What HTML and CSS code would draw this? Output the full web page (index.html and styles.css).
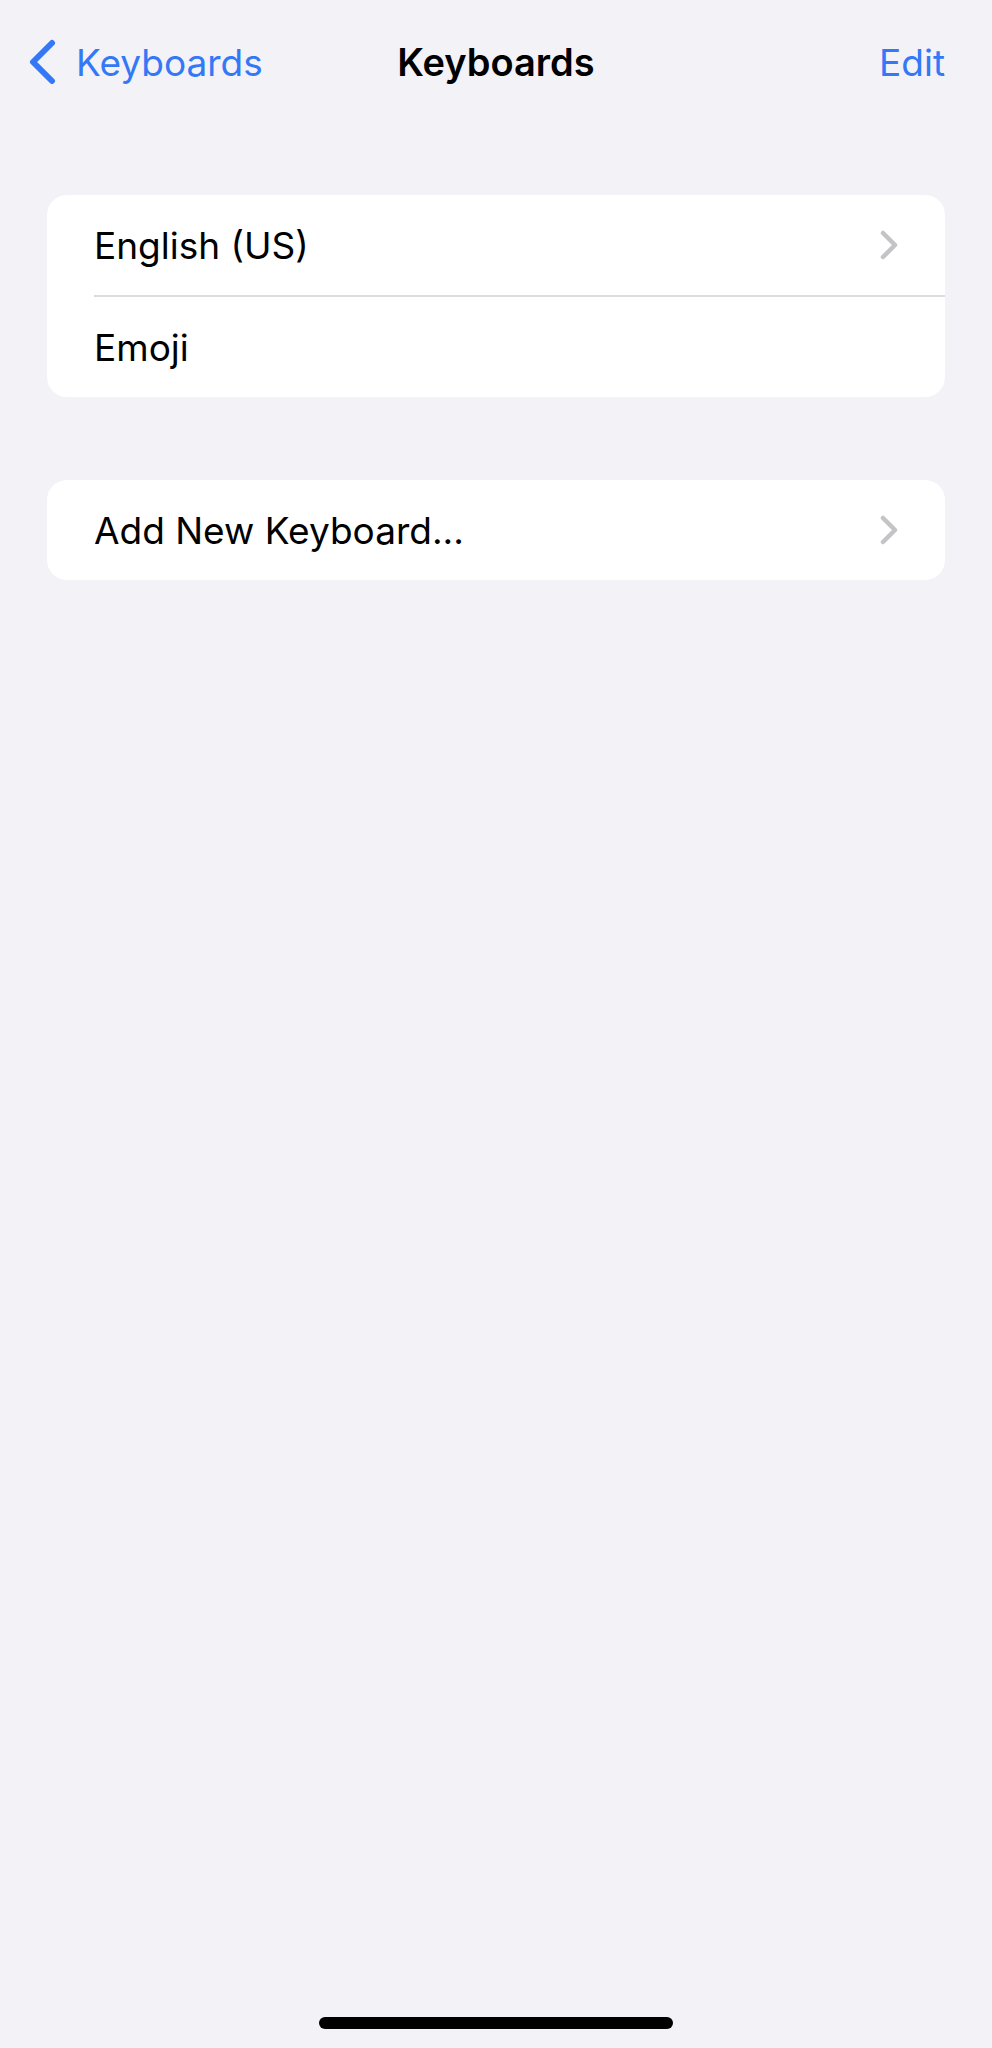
FILE: index.html
```html
<!DOCTYPE html>
<html lang="en">
<head>
  <meta charset="UTF-8">
  <title>Keyboards</title>
  <link rel="stylesheet" href="styles.css">
</head>
<body>
  <div class="screen">
    <header class="navbar">
      <a class="nav-back" href="#">
        <svg class="back-chevron" width="28" height="46" viewBox="0 0 28 46">
          <polyline points="24,4 5,23 24,42" fill="none" stroke="currentColor" stroke-width="6" stroke-linecap="round" stroke-linejoin="round"/>
        </svg>
        <span>Keyboards</span>
      </a>
      <h1 class="nav-title">Keyboards</h1>
      <a class="nav-action" href="#">Edit</a>
    </header>

    <main class="content">
      <div class="group">
        <div class="row">
          <span class="row-label">English (US)</span>
          <svg class="disclosure" width="20" height="30" viewBox="0 0 20 30">
            <polyline points="4,3 16,15 4,27" fill="none" stroke="currentColor" stroke-width="4.5" stroke-linecap="round" stroke-linejoin="round"/>
          </svg>
        </div>
        <div class="row">
          <span class="row-label">Emoji</span>
        </div>
      </div>

      <div class="group">
        <div class="row">
          <span class="row-label">Add New Keyboard...</span>
          <svg class="disclosure" width="20" height="30" viewBox="0 0 20 30">
            <polyline points="4,3 16,15 4,27" fill="none" stroke="currentColor" stroke-width="4.5" stroke-linecap="round" stroke-linejoin="round"/>
          </svg>
        </div>
      </div>
    </main>

    <div class="home-bar"><span class="home-indicator"></span></div>
  </div>
</body>
</html>
```

FILE: styles.css
```css
body {
  margin: 0;
  background: #f2f2f7;
  font-family: Inter, "Noto Sans", sans-serif;
  color: #000;
}

.screen {
  display: flex;
  flex-direction: column;
  min-height: 100vh;
}

.navbar {
  display: grid;
  grid-template-columns: 1fr auto 1fr;
  align-items: center;
  height: 64px;
  padding: 30px 28px 0;
}

.nav-back {
  display: flex;
  align-items: center;
  gap: 20px;
  color: #3478f6;
  text-decoration: none;
  font-size: 37px;
}

.back-chevron {
  display: block;
}

.nav-title {
  margin: 0;
  font-size: 38px;
  font-weight: 600;
}

.nav-action {
  justify-self: end;
  margin-right: 19px;
  color: #3478f6;
  text-decoration: none;
  font-size: 37px;
}

.content {
  flex: 1;
  display: flex;
  flex-direction: column;
  gap: 83px;
  padding: 101px 47px 0;
}

.group {
  background: #fff;
  border-radius: 20px;
  overflow: hidden;
}

.row {
  display: flex;
  align-items: center;
  justify-content: space-between;
  height: 100px;
  margin-left: 47px;
  padding-right: 46px;
}

.row + .row {
  border-top: 2px solid #dcdce0;
}

.row-label {
  font-size: 37px;
}

.disclosure {
  display: block;
  color: #c4c4c7;
}

.home-bar {
  display: flex;
  justify-content: center;
  padding-bottom: 19px;
}

.home-indicator {
  width: 354px;
  height: 12px;
  border-radius: 6px;
  background: #000;
}
```
